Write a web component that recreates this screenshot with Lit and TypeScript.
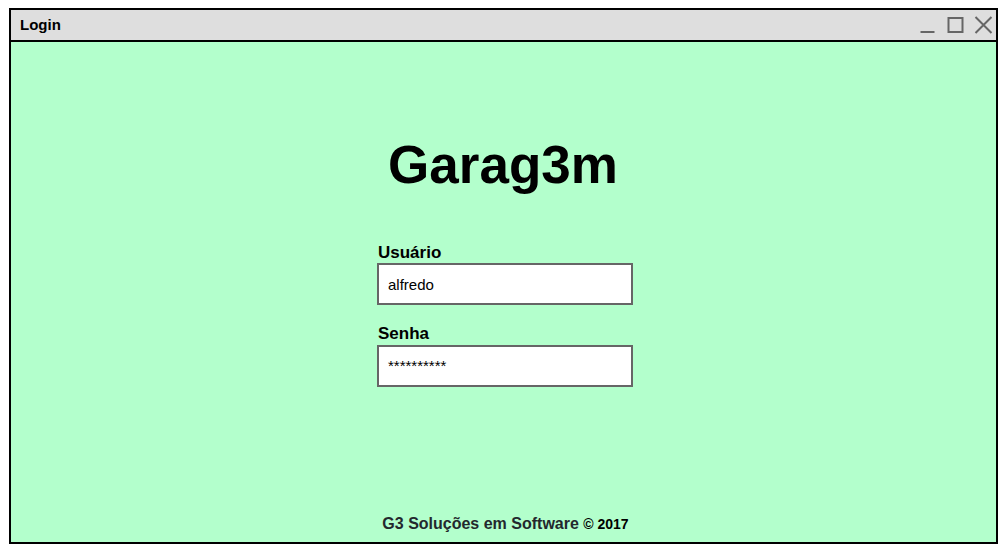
import { LitElement, html, css } from "lit";
import { customElement } from "lit/decorators.js";

@customElement("app-root")
class AppRoot extends LitElement {
  static styles = css`
    :host { display: block; box-sizing: border-box; height: 549px; padding: 8px 4px 5px 9px; background: #fff; font-family: "Liberation Sans", Arial, sans-serif; color: #000; }
    .window { box-sizing: border-box; height: 536px; border: 2px solid #000; background: #b3ffcc; display: flex; flex-direction: column; }
    .bar { height: 30px; flex: none; background: #dedede; border-bottom: 2px solid #000; display: flex; justify-content: space-between; }
    .caption { font-size: 15px; font-weight: bold; line-height: 30px; padding-left: 9px; }
    .controls { width: 80px; height: 30px; fill: none; stroke: #666; stroke-width: 2; }
    .body { flex: 1; display: flex; flex-direction: column; align-items: center; }
    h1 { margin: 93px 0 0; padding-right: 1px; font-size: 53px; line-height: 60px; }
    .form { width: 256px; margin: 48px 0 0 3px; }
    label { display: block; font-size: 17px; font-weight: bold; line-height: 20px; height: 20px; padding-left: 1px; }
    .field { box-sizing: border-box; height: 42px; border: 2px solid #666; background: #fff; padding-left: 9px; font-size: 15px; line-height: 40px; }
    .secret { margin-top: 1px; line-height: 38px; }
    .gap { height: 19px; }
    .foot { margin: auto 0 8px 4px; font-size: 16px; line-height: 20px; font-weight: bold; color: #23282d; }
    .year { font-size: 14px; color: #000; }
  `;
  render() {
    return html`<div class="window">
      <div class="bar"><div class="caption">Login</div>
        <svg class="controls" viewBox="0 0 80 30"><path d="M4.5 22h14M32.500 8h14v14h-14zM59.500 7l16 16M75.500 7l-16 16"/></svg></div>
      <div class="body"><h1>Garag3m</h1>
        <div class="form"><label>Usuário</label><div class="field">alfredo</div><div class="gap"></div><label>Senha</label><div class="field secret">**********</div></div>
        <div class="foot">G3 Soluções em Software <span class="year">© 2017</span></div>
      </div></div>`;
  }
}
